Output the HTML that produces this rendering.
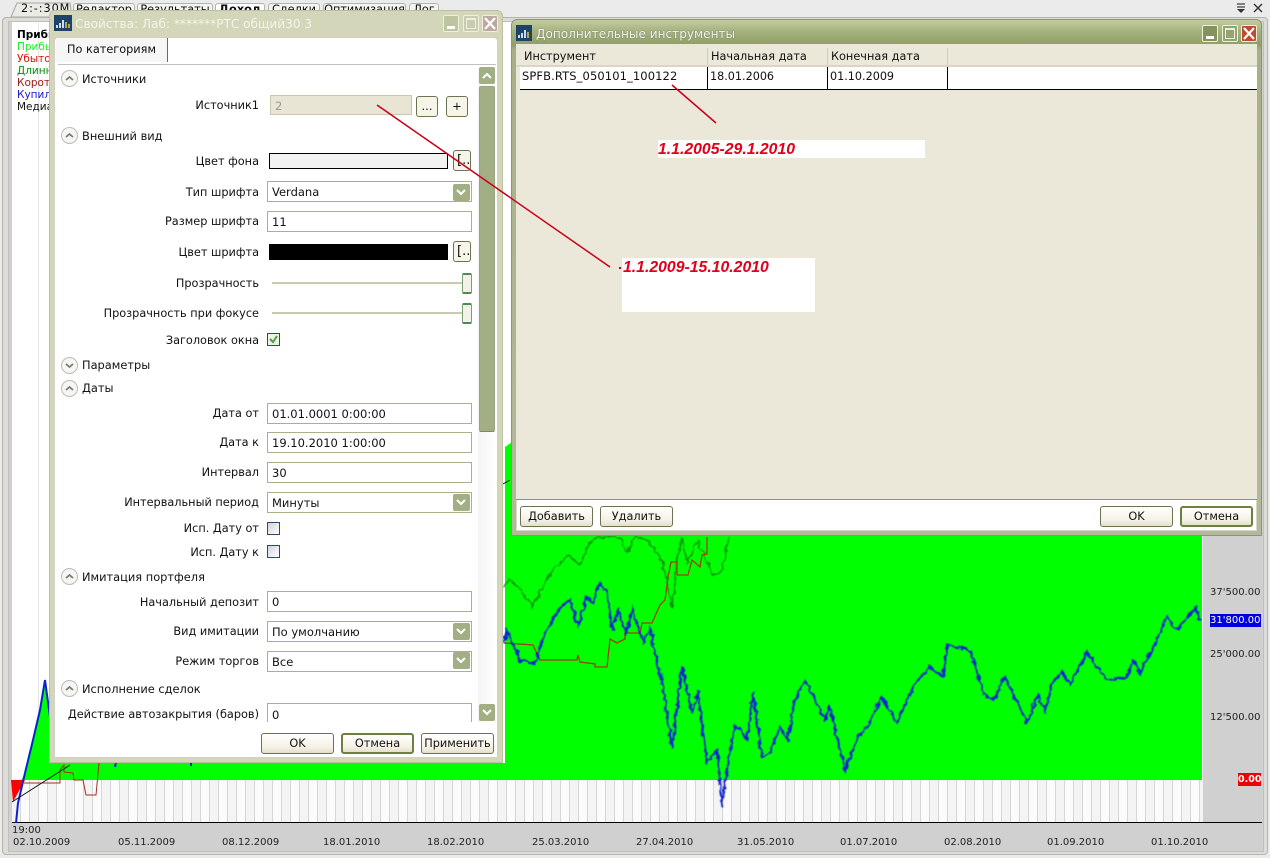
<!DOCTYPE html>
<html><head><meta charset="utf-8"><style>
html,body{margin:0;padding:0}
body{width:1270px;height:858px;overflow:hidden;position:relative;background:#ebebeb;font-family:"DejaVu Sans","Liberation Sans",sans-serif;font-size:11.5px;color:#111;filter:blur(.3px)}
.a{position:absolute;box-sizing:border-box;white-space:nowrap}
.l{position:absolute;right:1011px;white-space:nowrap;line-height:14px;transform:translateY(-6px);font-size:11.3px}
.sec{position:absolute;left:82px;white-space:nowrap;line-height:14px;transform:translateY(-6px);font-size:11.4px}
.ci{position:absolute;left:61px;width:17px;height:17px;box-sizing:border-box;border:1px solid #bbb;border-radius:50%;background:#f6f6f2;transform:translateY(-8px)}
.ci svg{position:absolute;left:3px;top:4px}
.f{position:absolute;left:267px;width:205px;height:21px;box-sizing:border-box;border:1px solid #aab08a;background:#fff;padding:1px 0 0 4px;line-height:19px}
.dd{position:absolute;left:453px;width:17px;height:17px;background:#a2ae84;border-radius:2px}
.dd svg,.sb svg{position:absolute;left:3px;top:5px}
.b{position:absolute;box-sizing:border-box;height:21px;width:73px;border:1px solid #6c7350;border-radius:3px;background:linear-gradient(#fff,#f4f1e4 70%,#e4e0cc);text-align:center;line-height:20px;font-size:11.3px}
.bd{border:2px solid #6c8040;line-height:18px}
.sm{position:absolute;box-sizing:border-box;width:22px;height:21px;border:1px solid #6c7350;border-radius:3px;background:#f7f5ea;text-align:center;line-height:19px}
.cb{position:absolute;left:267px;width:13px;height:13px;box-sizing:border-box;border:1px solid #2c4a6c;background:linear-gradient(135deg,#d0d4d8,#fff)}
.sl{position:absolute;left:272px;width:195px;height:2px;background:#c8cbb0}
.th{position:absolute;left:462px;width:10px;height:21px;box-sizing:border-box;border:1px solid #79a070;border-bottom:2px solid #4c8a50;border-top:2px solid #4c8a50;border-radius:2px;background:#f2f2ea}
.win{position:absolute;box-sizing:border-box;width:16px;height:17px;border:1px solid #eef0dc;border-radius:2px}
.ax{position:absolute;font-size:10px;color:#222;white-space:nowrap;line-height:13px}
.leg{position:absolute;left:17px;font-size:10.5px;line-height:12px;white-space:nowrap}
.tb{position:absolute;top:3px;height:14px;box-sizing:border-box;border:1px solid #b4b4ac;border-bottom:none;border-radius:3px 3px 0 0;background:#f4f4f0;font-size:11.300px;text-align:center;line-height:12px}
</style></head><body>

<!-- tabs -->
<svg class="a" style="left:0;top:0" width="80" height="20"><path d="M11 17L17 3L70 3L72 17Z" fill="#ebebe6" stroke="#a8a8a0"/></svg>
<div class="a" style="left:21px;top:3px;line-height:12px;font-size:11.300px;letter-spacing:.9px">2:-:30M</div>
<div class="tb" style="left:73px;width:62px">Редактор</div>
<div class="tb" style="left:137px;width:76px">Результаты</div>
<div class="tb" style="left:215px;width:50px;font-weight:bold;background:#fff">Доход</div>
<div class="tb" style="left:268px;width:52px">Сделки</div>
<div class="tb" style="left:323px;width:83px">Оптимизация</div>
<div class="tb" style="left:409px;width:30px">Лог</div>
<svg class="a" style="left:1235px;top:2px" width="30" height="13"><path d="M2 2H10M2 5H10" stroke="#444" stroke-width="1.200"/><path d="M2 7L10 7L6 11Z" fill="#333"/><path d="M19 2L27 10M27 2L19 10" stroke="#333" stroke-width="1.400"/></svg>

<!-- outer frame -->
<div class="a" style="left:2px;top:17px;width:1266px;height:838px;border:1px solid #b4b4ac;border-radius:4px;background:#dcdcd8"></div>
<div class="a" style="left:8px;top:21px;width:1256px;height:831px;border:1px solid #c0c0b8;background:#d0d0d0"></div>

<!-- chart -->
<div class="a" style="left:12px;top:22px;width:1191px;height:800px;background:repeating-linear-gradient(90deg,#fff 0,#fff 26px,#e6e6e6 26px,#e6e6e6 27px)"></div>
<div class="a" style="left:12px;top:780px;width:1191px;height:42px;background:repeating-linear-gradient(90deg,#f4f4f4 0,#f4f4f4 8px,#d6d6d6 8px,#d6d6d6 9px,#fbfbfb 9px,#fbfbfb 17px,#d6d6d6 17px,#d6d6d6 18px)"></div>
<div class="a" style="left:12px;top:822px;width:1250px;height:1px;background:#000"></div>

<svg class="a" style="left:0;top:0" width="1270" height="858" viewBox="0 0 1270 858">
<defs><filter id="j" x="-5%" y="-5%" width="110%" height="110%"><feTurbulence type="fractalNoise" baseFrequency="0.18" numOctaves="2" seed="4"/><feDisplacementMap in="SourceGraphic" scale="6" xChannelSelector="R" yChannelSelector="G"/><feGaussianBlur stdDeviation="0.45"/></filter></defs>
<path d="M12 780L13 790L25 775L33 740L45 680L55 740L70 763L505 763L505 447L512 442L512 536L1202 536L1202 780Z" fill="#00ff00"/>
<path d="M11 780L25 780L13 802Z" fill="#ff0000"/>
<path d="M504 587L510 580L523 593L532 607L543 587L555 567L568 555L580 565L588 545L597 537L620 537L627 552L635 537L647 540L660 557L667 580L672 608L677 557L682 538L687 563L697 540L703 553L713 575L722 570L728 543L730 537" fill="none" stroke="#0c8e0c" stroke-width="1.500" filter="url(#j)"/>
<path d="M504 643L533 645L540 660L577 660L578 655L580 662L595 664L595 667L607 667L610 639L617 643L625 639L625 633L640 633L642 623L652 623L660 605L665 600L668 577L671 562L677 562L677 575L688 575L692 560L700 567L702 555L707 554L707 537" fill="none" stroke="#a43c10" stroke-width="1.300"/>
<path d="M504 643L507 630L520 660L535 663L545 633L558 610L570 600L578 625L587 597L593 603L600 583L607 593L612 630L618 610L626 633L633 608L643 643L650 628L658 667L663 687L672 748L682 667L692 713L698 692L707 763L717 750L722 807L727 770L735 725L747 740L753 693L762 757L770 753L780 727L787 740L795 700L805 680L825 720L830 707L845 770L858 737L867 727L882 697L897 723L915 683L930 667L943 677L948 645L960 648L970 650L983 693L993 700L1005 677L1027 723L1038 695L1045 710L1053 682L1062 672L1070 685L1087 653L1107 680L1127 677L1133 660L1140 673L1157 640L1167 617L1177 630L1195 608L1200 620" fill="none" stroke="#0a22d6" stroke-width="2.200" filter="url(#j)"/>
<path d="M16 823L18 803L25 773L33 740L40 710L45 680L50 717M115 767L116 762M191 766L191 762" fill="none" stroke="#0a22d6" stroke-width="2"/>
<path d="M13 783L60 783L60 770L64 765L64 772L73 773L74 780L83 780L86 795L96 795L99 763" fill="none" stroke="#a03020" stroke-width="1"/>
<path d="M12 802L70 765M503 484L510 480" stroke="#111" stroke-width="1"/>
</svg>

<div class="ax" style="left:12px;top:824px">19:00</div>
<div class="ax" style="left:13px;top:836px">02.10.2009</div>
<div class="ax" style="left:118px;top:836px">05.11.2009</div>
<div class="ax" style="left:222px;top:836px">08.12.2009</div>
<div class="ax" style="left:323px;top:836px">18.01.2010</div>
<div class="ax" style="left:427px;top:836px">18.02.2010</div>
<div class="ax" style="left:532px;top:836px">25.03.2010</div>
<div class="ax" style="left:636px;top:836px">27.04.2010</div>
<div class="ax" style="left:737px;top:836px">31.05.2010</div>
<div class="ax" style="left:840px;top:836px">01.07.2010</div>
<div class="ax" style="left:944px;top:836px">02.08.2010</div>
<div class="ax" style="left:1047px;top:836px">01.09.2010</div>
<div class="ax" style="left:1151px;top:836px">01.10.2010</div>
<div class="ax" style="left:1210px;top:586px">37'500.00</div>
<div class="ax" style="left:1210px;top:614px;background:#0000e0;color:#fff;width:51px;height:13px">31'800.00</div>
<div class="ax" style="left:1210px;top:648px">25'000.00</div>
<div class="ax" style="left:1210px;top:711px">12'500.00</div>
<div class="ax" style="left:1238px;top:773px;background:#ee0000;color:#fff;width:23px;height:13px;font-weight:bold;font-size:9.500px">0.00</div>

<div class="leg" style="top:29px;font-weight:bold;color:#000">Прибыль</div>
<div class="leg" style="top:41px;color:#22ee22">Прибыль</div>
<div class="leg" style="top:53px;color:#e01010">Убыток</div>
<div class="leg" style="top:65px;color:#0a8a0a">Длинные</div>
<div class="leg" style="top:77px;color:#a01818">Короткие</div>
<div class="leg" style="top:89px;color:#1818d0">Купил</div>
<div class="leg" style="top:101px;color:#111">Медиана</div>

<!-- Dialog 1 -->
<div class="a" style="left:49px;top:10px;width:454px;height:753px;border-radius:6px 6px 0 0;background:#d3d6b8;border:1px solid #bcc0a0"></div>
<div class="a" style="left:54px;top:15px;width:18px;height:16px;background:#1c4468"></div>
<svg class="a" style="left:54px;top:15px" width="18" height="16"><path d="M3 13V10M6 13V8M9 13V5" stroke="#fff" stroke-width="1.600"/><path d="M12 13V7M15 13V9" stroke="#e0c040" stroke-width="1.600"/></svg>
<div class="a" style="left:75px;top:16px;font-size:12.100px;line-height:16px;color:#f4f5e8;font-weight:500">Свойства: Лаб: *******РТС общий30 3</div>
<div class="win" style="left:443px;top:15px;background:#bcc4a0"><div class="a" style="left:3px;bottom:2px;width:8px;height:3px;background:#fff"></div></div>
<div class="win" style="left:463px;top:15px;background:#c8cdb0"><div class="a" style="left:2px;top:2px;width:10px;height:11px;border:1px solid #eef0dc;border-top-width:2px"></div></div>
<div class="win" style="left:482px;top:15px;background:#bca8a0"><svg width="14" height="15" style="position:absolute;left:0;top:0"><path d="M2 2L12 13M12 2L2 13" stroke="#fff" stroke-width="2.200"/></svg></div>
<div class="a" style="left:54px;top:37px;width:444px;height:721px;background:#fff;border:1px solid #d0d0c8;border-radius:4px 4px 0 0"></div>
<div class="a" style="left:56px;top:38px;width:112px;height:24px;background:#f6f6f6;border-right:1px solid #6a6a6a;text-align:center;line-height:23px;font-size:11.300px">По категориям</div>
<div class="a" style="left:58px;top:64px;width:438px;height:1px;background:#c0c0c0"></div>

<div class="a" style="left:478px;top:68px;width:18px;height:654px;background:linear-gradient(90deg,#f4f4f4,#fff)"></div>
<div class="a sb" style="left:479px;top:67px;width:16px;height:17px;background:#a2ae84;border-radius:2px"><svg width="10" height="7"><path d="M1 6L5 2L9 6" fill="none" stroke="#fff" stroke-width="2"/></svg></div>
<div class="a" style="left:479px;top:86px;width:16px;height:346px;background:#a2ae84;border:1px solid #9aa480;border-bottom:1px solid #7e8866;border-radius:2px"></div>
<div class="a sb" style="left:479px;top:704px;width:16px;height:17px;background:#a2ae84;border-radius:2px"><svg width="10" height="7"><path d="M1 1L5 5L9 1" fill="none" stroke="#fff" stroke-width="2"/></svg></div>

<div class="ci" style="top:78px"><svg width="9" height="7"><path d="M1 5L4.500 2L8 5" fill="none" stroke="#777" stroke-width="1.800"/></svg></div><div class="sec" style="top:78px">Источники</div>
<div class="l" style="top:105px">Источник1</div>
<div class="a" style="left:270px;top:95px;width:142px;height:20px;background:#e8e5d5;border:1px solid #c8c8b0;color:#999;padding:1px 0 0 4px;line-height:18px">2</div>
<div class="sm" style="left:416px;top:96px">...</div>
<div class="sm" style="left:446px;top:96px">+</div>

<div class="ci" style="top:135px"><svg width="9" height="7"><path d="M1 5L4.500 2L8 5" fill="none" stroke="#777" stroke-width="1.800"/></svg></div><div class="sec" style="top:135px">Внешний вид</div>
<div class="l" style="top:161px">Цвет фона</div>
<div class="a" style="left:269px;top:153px;width:179px;height:16px;background:#f2f2f2;border:1px solid #000"></div>
<div class="sm" style="left:453px;top:150px;width:18px;text-align:left;padding-left:3px;font-size:13px">[..</div>

<div class="l" style="top:192px">Тип шрифта</div>
<div class="f" style="top:181px">Verdana</div>
<div class="dd" style="top:184px"><svg width="10" height="7"><path d="M1 1L5 5L9 1" fill="none" stroke="#fff" stroke-width="2"/></svg></div>
<div class="l" style="top:221px">Размер шрифта</div>
<div class="f" style="top:211px">11</div>
<div class="l" style="top:252px">Цвет шрифта</div>
<div class="a" style="left:269px;top:244px;width:179px;height:16px;background:#000"></div>
<div class="sm" style="left:453px;top:241px;width:18px;text-align:left;padding-left:3px;font-size:13px">[..</div>
<div class="l" style="top:283px">Прозрачность</div>
<div class="sl" style="top:282px"></div><div class="th" style="top:273px"></div>
<div class="l" style="top:313px">Прозрачность при фокусе</div>
<div class="sl" style="top:312px"></div><div class="th" style="top:303px"></div>
<div class="l" style="top:340px">Заголовок окна</div>
<div class="cb" style="top:333px;background:#eef2e8"><svg width="11" height="11" style="position:absolute;left:0;top:0"><path d="M2 5L5 8L9 2" fill="none" stroke="#4ea040" stroke-width="2"/></svg></div>

<div class="ci" style="top:365px"><svg width="9" height="7"><path d="M1 2L4.500 5L8 2" fill="none" stroke="#777" stroke-width="1.800"/></svg></div><div class="sec" style="top:364px">Параметры</div>
<div class="ci" style="top:388px"><svg width="9" height="7"><path d="M1 5L4.500 2L8 5" fill="none" stroke="#777" stroke-width="1.800"/></svg></div><div class="sec" style="top:387px">Даты</div>
<div class="l" style="top:413px">Дата от</div><div class="f" style="top:403px">01.01.0001 0:00:00</div>
<div class="l" style="top:442px">Дата к</div><div class="f" style="top:432px">19.10.2010 1:00:00</div>
<div class="l" style="top:472px">Интервал</div><div class="f" style="top:462px">30</div>
<div class="l" style="top:502px">Интервальный период</div><div class="f" style="top:492px">Минуты</div>
<div class="dd" style="top:494px"><svg width="10" height="7"><path d="M1 1L5 5L9 1" fill="none" stroke="#fff" stroke-width="2"/></svg></div>
<div class="l" style="top:528px">Исп. Дату от</div><div class="cb" style="top:522px"></div>
<div class="l" style="top:552px">Исп. Дату к</div><div class="cb" style="top:545px"></div>
<div class="ci" style="top:576px"><svg width="9" height="7"><path d="M1 5L4.500 2L8 5" fill="none" stroke="#777" stroke-width="1.800"/></svg></div><div class="sec" style="top:576px">Имитация портфеля</div>
<div class="l" style="top:602px">Начальный депозит</div><div class="f" style="top:591px">0</div>
<div class="l" style="top:631px">Вид имитации</div><div class="f" style="top:621px">По умолчанию</div>
<div class="dd" style="top:623px"><svg width="10" height="7"><path d="M1 1L5 5L9 1" fill="none" stroke="#fff" stroke-width="2"/></svg></div>
<div class="l" style="top:661px">Режим торгов</div><div class="f" style="top:651px">Все</div>
<div class="dd" style="top:652px"><svg width="10" height="7"><path d="M1 1L5 5L9 1" fill="none" stroke="#fff" stroke-width="2"/></svg></div>
<div class="ci" style="top:688px"><svg width="9" height="7"><path d="M1 5L4.500 2L8 5" fill="none" stroke="#777" stroke-width="1.800"/></svg></div><div class="sec" style="top:688px">Исполнение сделок</div>
<div class="l" style="top:714px">Действие автозакрытия (баров)</div>
<div class="a" style="left:267px;top:703px;width:205px;height:19px;border:1px solid #aab08a;border-bottom:none;padding-left:4px;line-height:22px">0</div>
<div class="b" style="left:261px;top:733px">OK</div>
<div class="b bd" style="left:341px;top:733px">Отмена</div>
<div class="b" style="left:421px;top:733px">Применить</div>

<!-- Dialog 2 -->
<div class="a" style="left:511px;top:19px;width:751px;height:517px;background:linear-gradient(#c4cca0 0,#a3b07c 12px,#8f9f66 25px,#a8b088 30px,#b4b89c 100%);border:1px solid #8c9470;border-radius:6px 6px 0 0"></div>
<div class="a" style="left:516px;top:25px;width:16px;height:16px;background:#1c4468"></div>
<svg class="a" style="left:516px;top:25px" width="16" height="16"><path d="M3 13V10M6 13V8M9 13V5" stroke="#fff" stroke-width="1.600"/><path d="M12 13V7" stroke="#e0c040" stroke-width="1.600"/></svg>
<div class="a" style="left:536px;top:26px;font-size:12.100px;line-height:16px;color:#f6f6ea;text-shadow:0 0 1px #556">Дополнительные инструменты</div>
<div class="win" style="left:1202px;top:25px;background:#85915f"><div class="a" style="left:3px;bottom:2px;width:8px;height:3px;background:#fff"></div></div>
<div class="win" style="left:1222px;top:25px;background:#95a274"><div class="a" style="left:2px;top:2px;width:10px;height:11px;border:1px solid #eef0dc;border-top-width:2px"></div></div>
<div class="win" style="left:1241px;top:25px;background:#bf4a30"><svg width="14" height="15" style="position:absolute;left:0;top:0"><path d="M2 2L12 13M12 2L2 13" stroke="#fff" stroke-width="2.200"/></svg></div>
<div class="a" style="left:516px;top:44px;width:741px;height:487px;background:#fff;border:1px solid #d8d8c8"></div>
<div class="a" style="left:516px;top:44px;width:741px;height:456px;background:#ebe8d9;border-bottom:1px solid #8090a8"></div>
<div class="a" style="left:520px;top:67px;width:737px;height:23px;background:#fff;border-bottom:1px solid #000"></div>
<div class="a" style="left:516px;top:65px;width:741px;height:2px;background:#d8d6c4"></div>
<div class="a" style="left:707px;top:48px;width:1px;height:17px;background:#cfccb8"></div>
<div class="a" style="left:827px;top:48px;width:1px;height:17px;background:#cfccb8"></div>
<div class="a" style="left:947px;top:48px;width:1px;height:17px;background:#cfccb8"></div>
<div class="a" style="left:707px;top:67px;width:1px;height:22px;background:#000"></div>
<div class="a" style="left:827px;top:67px;width:1px;height:22px;background:#000"></div>
<div class="a" style="left:947px;top:67px;width:1px;height:22px;background:#000"></div>
<div class="a" style="left:524px;top:49px;line-height:15px;font-size:11.300px">Инструмент</div>
<div class="a" style="left:711px;top:49px;line-height:15px;font-size:11.300px">Начальная дата</div>
<div class="a" style="left:831px;top:49px;line-height:15px;font-size:11.300px">Конечная дата</div>
<div class="a" style="left:522px;top:69px;line-height:15px;letter-spacing:.1px">SPFB.RTS_050101_100122</div>
<div class="a" style="left:710px;top:69px;line-height:15px;font-size:11.200px">18.01.2006</div>
<div class="a" style="left:830px;top:69px;line-height:15px;font-size:11.200px">01.10.2009</div>
<div class="b" style="left:520px;top:506px">Добавить</div>
<div class="b" style="left:600px;top:506px">Удалить</div>
<div class="b" style="left:1100px;top:506px">OK</div>
<div class="b bd" style="left:1180px;top:506px">Отмена</div>

<!-- annotations -->
<div class="a" style="left:658px;top:140px;width:267px;height:18px;background:#fff"></div>
<div class="a" style="left:622px;top:258px;width:193px;height:54px;background:#fff"></div>
<div class="a" style="left:658px;top:141px;font:italic bold 15.800px/18px 'Liberation Sans',sans-serif;color:#e00018">1.1.2005-29.1.2010</div>
<div class="a" style="left:623px;top:259px;font:italic bold 15.800px/18px 'Liberation Sans',sans-serif;color:#e00018">1.1.2009-15.10.2010</div>
<svg class="a" style="left:0;top:0" width="1270" height="858"><path d="M377 105L610 267M672 85L716 123" stroke="#c80018" stroke-width="1.500" fill="none"/><rect x="619" y="267" width="2" height="2" fill="#c80018"/></svg>
</body></html>
